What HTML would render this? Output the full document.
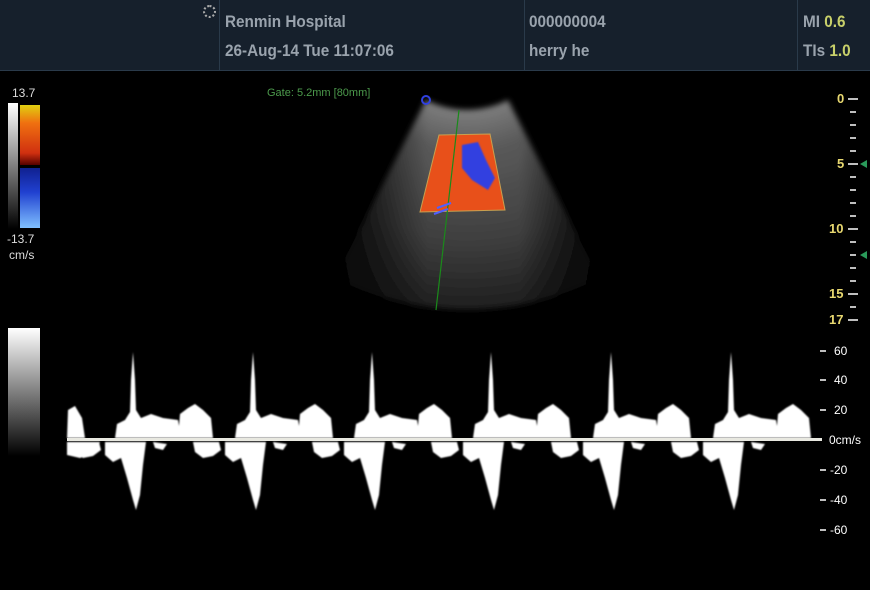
<!DOCTYPE html>
<html><head><meta charset="utf-8"><style>
body{margin:0;width:870px;height:590px;background:#000;overflow:hidden;font-family:"Liberation Sans",sans-serif;position:relative}
.top{position:absolute;left:0;top:0;width:870px;height:70px;background:#16202c;border-bottom:1px solid #2a3a4a}
.t{position:absolute;color:#9aa3ad;font-size:17px;font-weight:bold;transform:scaleX(0.9);transform-origin:left}
.sep{position:absolute;top:0;width:1px;height:70px;background:#2a3a4a}
.s{position:absolute;color:#ddd;font-size:12px}
.y{position:absolute;color:#e8d870;font-size:13px;font-weight:bold}
.w{position:absolute;color:#fff;font-size:12px}
</style></head><body>
<div class="top">
<div class="sep" style="left:219px"></div><div class="sep" style="left:524px"></div><div class="sep" style="left:797px"></div>
<div class="t" style="left:225px;top:12px">Renmin Hospital</div>
<div class="t" style="left:225px;top:41px">26-Aug-14 Tue 11:07:06</div>
<div class="t" style="left:529px;top:12px">000000004</div>
<div class="t" style="left:529px;top:41px">herry he</div>
<div class="t" style="left:803px;top:12px">MI <span style="color:#c8d06a">0.6</span></div>
<div class="t" style="left:803px;top:41px">TIs <span style="color:#c8d06a">1.0</span></div>
<div style="position:absolute;left:203px;top:5px;width:9px;height:9px;border:2px dotted #aaa;border-radius:50%"></div>
</div>
<div class="s" style="left:12px;top:86px">13.7</div>
<div style="position:absolute;left:8px;top:103px;width:10px;height:126px;background:linear-gradient(#fff,#000)"></div>
<div style="position:absolute;left:20px;top:105px;width:20px;height:60px;background:linear-gradient(#e0d010,#f07010 30%,#d03010 80%,#500)"></div>
<div style="position:absolute;left:20px;top:168px;width:20px;height:60px;background:linear-gradient(#102090,#2040d0 40%,#80c0ff)"></div>
<div class="s" style="left:7px;top:232px">-13.7</div>
<div class="s" style="left:9px;top:248px">cm/s</div>
<div style="position:absolute;left:8px;top:328px;width:32px;height:128px;background:linear-gradient(#fff,#000)"></div>
<div style="position:absolute;left:267px;top:87px;color:#4c9a4c;font-size:11px">Gate: 5.2mm [80mm]</div>
<svg width="870" height="590" style="position:absolute;left:0;top:0">
<defs>
<radialGradient id="sec" cx="467" cy="19" r="291" gradientUnits="userSpaceOnUse">
<stop offset="0.3" stop-color="#808080"/><stop offset="0.45" stop-color="#5a5a5a"/><stop offset="0.75" stop-color="#404040"/><stop offset="1" stop-color="#1e1e1e"/></radialGradient>
<linearGradient id="side" x1="335" x2="599" gradientUnits="userSpaceOnUse"><stop offset="0" stop-color="#000" stop-opacity=".95"/><stop offset=".35" stop-color="#000" stop-opacity="0"/><stop offset=".7" stop-color="#000" stop-opacity="0"/><stop offset="1" stop-color="#000" stop-opacity=".95"/></linearGradient>
<filter id="bl"><feGaussianBlur stdDeviation="0.8"/></filter>
<filter id="bl2"><feGaussianBlur stdDeviation="3"/></filter>
<g id="beat" fill="#fff">
<path d="M-18 438 L-16 424 L-8 420 L-3 412 L-2 380 L0 352 L2 380 L3 410 L8 418 L18 414 L30 418 L45 420 L48 438Z"/>
<path d="M45 438 L47 414 L55 408 L62 404 L70 410 L78 418 L80 438Z"/>
<path d="M-28 442 L-28 455 L-20 462 L-12 458 L-6 478 L0 500 L3 510 L7 495 L10 465 L13 442Z"/>
<path d="M-60 442 L-58 452 L-50 458 L-40 456 L-32 450 L-34 442Z"/>
<path d="M20 442 L22 448 L30 450 L34 444Z"/>
</g>
</defs>
<g filter="url(#bl2)">
<path d="M426 100 A91 91 0 0 0 508 100 L599 278 A291 291 0 0 1 335 278 Z" fill="url(#sec)"/>
<path d="M426 100 A91 91 0 0 0 508 100 L599 278 A291 291 0 0 1 335 278 Z" fill="url(#side)"/>
</g>
<path d="M439 135 L490 134 L505 210 L420 212 Z" fill="#e8501a" stroke="#c8a050" stroke-width="1"/>
<path d="M462 145 L478 142 L486 160 L495 178 L488 190 L472 180 L462 168Z" fill="#3040e0" filter="url(#bl)"/>
<circle cx="426" cy="100" r="4" fill="none" stroke="#3040e0" stroke-width="2"/>
<line x1="459" y1="110" x2="436" y2="310" stroke="#1a8a1a" stroke-width="1.2"/>
<line x1="437" y1="208" x2="451" y2="203" stroke="#5060ff" stroke-width="2"/>
<line x1="434" y1="214" x2="448" y2="209" stroke="#5060ff" stroke-width="2"/>
<g filter="url(#bl)">
<path d="M67 438 L68 410 L75 406 L82 418 L85 438Z M67 442 L67 455 L80 458 L95 452 L100 442Z" fill="#fff"/>
<use href="#beat" x="133"/><use href="#beat" x="253"/><use href="#beat" x="372"/><use href="#beat" x="491"/><use href="#beat" x="611"/><use href="#beat" x="731"/>
</g>
<rect x="67" y="438" width="755" height="3" fill="#e8e8e0"/>
<g stroke="#fff" stroke-width="1.5">
<line x1="848" y1="99" x2="858" y2="99"/>
<line x1="850" y1="112" x2="856" y2="112"/><line x1="850" y1="125" x2="856" y2="125"/><line x1="850" y1="138" x2="856" y2="138"/><line x1="850" y1="151" x2="856" y2="151"/>
<line x1="848" y1="164" x2="858" y2="164"/>
<line x1="850" y1="177" x2="856" y2="177"/><line x1="850" y1="190" x2="856" y2="190"/><line x1="850" y1="203" x2="856" y2="203"/><line x1="850" y1="216" x2="856" y2="216"/>
<line x1="848" y1="229" x2="858" y2="229"/>
<line x1="850" y1="242" x2="856" y2="242"/><line x1="850" y1="255" x2="856" y2="255"/><line x1="850" y1="268" x2="856" y2="268"/><line x1="850" y1="281" x2="856" y2="281"/>
<line x1="848" y1="294" x2="858" y2="294"/><line x1="850" y1="307" x2="856" y2="307"/><line x1="848" y1="320" x2="858" y2="320"/>
<line x1="820" y1="351" x2="826" y2="351"/><line x1="820" y1="380" x2="826" y2="380"/><line x1="820" y1="410" x2="826" y2="410"/>
<line x1="820" y1="470" x2="826" y2="470"/><line x1="820" y1="500" x2="826" y2="500"/><line x1="820" y1="530" x2="826" y2="530"/>
</g>
<path d="M860 164 L867 160 L867 168Z M860 255 L867 251 L867 259Z" fill="#2a9a5a"/>
</svg>
<div class="y" style="left:837px;top:91px">0</div>
<div class="y" style="left:837px;top:156px">5</div>
<div class="y" style="left:829px;top:221px">10</div>
<div class="y" style="left:829px;top:286px">15</div>
<div class="y" style="left:829px;top:312px">17</div>
<div class="w" style="left:834px;top:344px">60</div>
<div class="w" style="left:834px;top:373px">40</div>
<div class="w" style="left:834px;top:403px">20</div>
<div class="w" style="left:829px;top:433px">0cm/s</div>
<div class="w" style="left:830px;top:463px">-20</div>
<div class="w" style="left:830px;top:493px">-40</div>
<div class="w" style="left:830px;top:523px">-60</div>
</body></html>
